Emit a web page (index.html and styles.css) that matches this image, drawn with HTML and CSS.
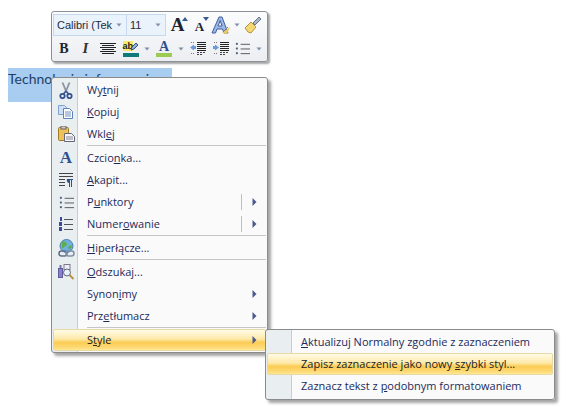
FILE: index.html
```html
<!DOCTYPE html>
<html lang="pl">
<head>
<meta charset="utf-8">
<title>Style</title>
<link rel="stylesheet" href="styles.css">
</head>
<body>
<svg class="defs" width="0" height="0" aria-hidden="true">
  <symbol id="dd" viewBox="0 0 6 4"><path d="M0.500 0.500h5L3 3.500z" fill="#7f90a8"/></symbol>
  <symbol id="arr" viewBox="0 0 5 8"><path d="M0.500 0L4.500 4L0.500 8z" fill="#4d5a8c"/></symbol>
  <symbol id="bullets" viewBox="0 0 16 16">
    <g fill="#4a5a7a"><rect x="1" y="2" width="2" height="2"/><rect x="1" y="7" width="2" height="2"/><rect x="1" y="12" width="2" height="2"/></g>
    <g fill="#555"><rect x="6" y="3" width="10" height="1"/><rect x="6" y="8" width="10" height="1"/><rect x="6" y="13" width="10" height="1"/></g>
  </symbol>
  <symbol id="lines" viewBox="0 0 16 13">
    <g fill="#222"><rect x="7" y="0" width="9" height="1"/><rect x="7" y="2" width="9" height="1"/><rect x="7" y="4" width="9" height="1"/><rect x="7" y="6" width="9" height="1"/><rect x="7" y="8" width="9" height="1"/></g>
    <g fill="#444"><rect x="7" y="10" width="2" height="1"/><rect x="10" y="10" width="2" height="1"/><rect x="13" y="10" width="2" height="1"/><rect x="7" y="12" width="2" height="1"/><rect x="10" y="12" width="2" height="1"/></g>
    <g fill="#777"><rect x="1" y="0" width="1" height="1"/><rect x="3" y="0" width="1" height="1"/><rect x="1" y="11" width="1" height="1"/><rect x="3" y="11" width="1" height="1"/></g>
  </symbol>
</svg>

<p class="doc"><span class="sel">Technologia informacyjna</span></p>

<div class="toolbar">
  <div class="row">
    <div class="combo c1"><span>Calibri (Tek</span><svg class="dd"><use href="#dd"/></svg></div>
    <div class="combo c2"><span>11</span><svg class="dd"><use href="#dd"/></svg></div>
    <div class="cell w23"><b class="ta big">A</b><svg class="up" width="6" height="4" viewBox="0 0 6 4"><path d="M0 4L3 0L6 4z" fill="#3a5a8c"/></svg></div>
    <div class="cell w21"><b class="ta small">A</b><svg class="up" width="6" height="4" viewBox="0 0 6 4"><path d="M0 0L3 4L6 0z" fill="#3a5a8c"/></svg></div>
    <div class="cell w30">
      <svg width="21" height="20" viewBox="0 0 21 20"><path d="M1 18L8 2h3l6 16h-4l-1.500-4H6L4.500 18z M7 11h4L9.200 5.500z" fill="#9cb8e6" stroke="#3f5f9e" stroke-width="1"/><path d="M11 18l8-6-3 7z" fill="#e9c85a"/><path d="M12 17l5-5" stroke="#778" stroke-width="1"/></svg>
      <svg class="dd"><use href="#dd"/></svg>
    </div>
    <div class="cell w26">
      <svg width="18" height="18" viewBox="0 0 18 18"><path d="M1 12L7 6l5 5-5 6-3-1z" fill="#f3d873" stroke="#b3953f" stroke-width="1"/><path d="M9 7l6-6 2 2-6 6z" fill="#aab6c6" stroke="#687486" stroke-width="1"/></svg>
    </div>
  </div>
  <div class="row r2">
    <div class="cell w22"><b class="tb">B</b></div>
    <div class="cell w21"><i class="ti">I</i></div>
    <div class="cell w24">
      <svg width="16" height="11" viewBox="0 0 16 11"><g fill="#222"><rect y="0" width="16" height="1"/><rect x="2" y="2" width="12" height="1"/><rect y="4" width="16" height="1"/><rect x="2" y="6" width="12" height="1"/><rect y="8" width="16" height="1"/><rect x="2" y="10" width="12" height="1"/></g></svg>
    </div>
    <div class="cell w21">
      <span class="hl"><span class="hl-ab">ab</span><svg class="pen" width="9" height="9" viewBox="0 0 9 9"><path d="M1 8l1-3 4-4 2 2-4 4z" fill="#8fb0e0" stroke="#3a4f7a" stroke-width="1"/></svg></span>
    </div>
    <div class="cell w12"><svg class="dd"><use href="#dd"/></svg></div>
    <div class="cell w22"><span class="fc">A</span></div>
    <div class="cell w11"><svg class="dd"><use href="#dd"/></svg></div>
    <div class="cell w24">
      <svg width="16" height="13" viewBox="0 0 16 13"><use href="#lines"/><path d="M0 5.500L4 2.500v1.500h2v3H4v1.500z" fill="#6a9bd8"/></svg>
    </div>
    <div class="cell w22">
      <svg width="16" height="13" viewBox="0 0 16 13"><use href="#lines"/><path d="M6 5.500L2 2.500v1.500H0v3h2v1.500z" fill="#6a9bd8"/></svg>
    </div>
    <div class="cell w20"><svg width="15" height="15"><use href="#bullets"/></svg></div>
    <div class="cell w14"><svg class="dd"><use href="#dd"/></svg></div>
  </div>
</div>

<div class="menu main">
  <div class="item"><span class="ico">
    <svg width="14" height="17" viewBox="0 0 14 17"><path d="M3.500 0.500l3.500 8.500M10.500 0.500L7 9" stroke="#8b95a2" stroke-width="1.800" fill="none"/><path d="M7 9L4.500 12M7 9l2.500 3" stroke="#3f5a92" stroke-width="1.800"/><circle cx="3.500" cy="14" r="2.200" fill="none" stroke="#33528f" stroke-width="1.800"/><circle cx="10.500" cy="14" r="2.200" fill="none" stroke="#33528f" stroke-width="1.800"/></svg>
  </span><span class="lbl">Wy<u>t</u>nij</span></div>
  <div class="item"><span class="ico">
    <svg width="16" height="14" viewBox="0 0 16 14"><path d="M0.500 0.500h6l2 2v7h-8z" fill="#cfe0f6" stroke="#7fa2d2"/><path d="M5.500 3.500h6l3 3v7h-9z" fill="#fff" stroke="#5f84b8"/><path d="M7 7h6M7 9h6M7 11h6" stroke="#6f8fc0"/></svg>
  </span><span class="lbl"><u>K</u>opiuj</span></div>
  <div class="item"><span class="ico">
    <svg width="17" height="16" viewBox="0 0 17 16"><rect x="0.500" y="1.500" width="10" height="13" rx="1" fill="#edc25a" stroke="#a07a24"/><rect x="3" y="0" width="5" height="3" fill="#c9ccd2" stroke="#666"/><path d="M6.500 7.500h7l3 3v5h-10z" fill="#f4f6fa" stroke="#667"/><path d="M8 11h7M8 13h7" stroke="#889"/></svg>
  </span><span class="lbl">Wkl<u>e</u>j</span></div>
  <div class="sep"></div>
  <div class="item"><span class="ico"><b class="mA">A</b></span><span class="lbl">Czcio<u>n</u>ka...</span></div>
  <div class="item"><span class="ico">
    <svg width="14" height="15" viewBox="0 0 14 15"><g fill="#444"><rect x="0" y="0" width="14" height="1"/><rect x="0" y="3" width="14" height="1"/><rect x="0" y="6" width="6" height="1"/><rect x="0" y="9" width="6" height="1"/><rect x="0" y="12" width="6" height="1"/></g><path d="M8 6h6v1h-1v7h-1V7h-1v7h-1v-4a2 2 0 0 1-2-2 2 2 0 0 1 0-2z" fill="#2f4f8f"/></svg>
  </span><span class="lbl"><u>A</u>kapit...</span></div>
  <div class="item"><span class="ico"><svg width="15" height="15"><use href="#bullets"/></svg></span><span class="lbl">P<u>u</u>nktory</span><span class="split"></span><svg class="arr"><use href="#arr"/></svg></div>
  <div class="item"><span class="ico">
    <svg width="14" height="15" viewBox="0 0 14 15"><g fill="#3b4a9b"><rect x="1" y="0" width="2" height="4"/><rect x="0" y="5" width="3" height="4"/><rect x="0" y="10" width="3" height="4"/></g><g fill="#555"><rect x="5" y="2" width="9" height="1"/><rect x="5" y="7" width="9" height="1"/><rect x="5" y="12" width="9" height="1"/></g></svg>
  </span><span class="lbl">Numer<u>o</u>wanie</span><span class="split"></span><svg class="arr"><use href="#arr"/></svg></div>
  <div class="sep"></div>
  <div class="item"><span class="ico">
    <svg width="17" height="18" viewBox="0 0 17 18"><circle cx="8.500" cy="7" r="6.500" fill="#6fb0e0" stroke="#4a7fae"/><path d="M4 3c2-1 5 0 5 2S5 8 4 10zM10 8l3-2 1 2-3 3z" fill="#5fae4c"/><rect x="1" y="12" width="8" height="5" rx="2.500" fill="none" stroke="#5f6f8a" stroke-width="1.500"/><rect x="8" y="12" width="8" height="5" rx="2.500" fill="none" stroke="#7f8fa8" stroke-width="1.500"/></svg>
  </span><span class="lbl"><u>H</u>iperłącze...</span></div>
  <div class="sep"></div>
  <div class="item"><span class="ico">
    <svg width="17" height="16" viewBox="0 0 17 16"><rect x="0.500" y="4.500" width="4" height="9" fill="#8a7fc8" stroke="#5f5a9a"/><rect x="1.500" y="1" width="2" height="3" fill="#7a70aa"/><rect x="6" y="0.500" width="6" height="5" fill="#eeeef4" stroke="#7a7a8a"/><circle cx="9" cy="8.500" r="3.500" fill="#e4f0fa" stroke="#667"/><path d="M11.500 11l4 4" stroke="#b89440" stroke-width="2"/></svg>
  </span><span class="lbl"><u>O</u>dszukaj...</span></div>
  <div class="item"><span class="ico"></span><span class="lbl">Synon<u>i</u>my</span><svg class="arr"><use href="#arr"/></svg></div>
  <div class="item"><span class="ico"></span><span class="lbl">Prz<u>e</u>tłumacz</span><svg class="arr"><use href="#arr"/></svg></div>
  <div class="sep"></div>
  <div class="item hot"><span class="ico"></span><span class="lbl">S<u>t</u>yle</span><svg class="arr"><use href="#arr"/></svg></div>
</div>

<div class="menu sub">
  <div class="item"><span class="ico"></span><span class="lbl"><u>A</u>ktualizuj Normalny zgodnie z zaznaczeniem</span></div>
  <div class="item hot"><span class="ico"></span><span class="lbl">Zapisz zaznaczenie jako nowy <u>s</u>zybki styl...</span></div>
  <div class="item"><span class="ico"></span><span class="lbl">Zaznacz tekst z <u>p</u>odobnym formatowaniem</span></div>
</div>
</body>
</html>
```
FILE: styles.css
```css
* { box-sizing: border-box; }
html, body { margin: 0; padding: 0; background: #fff; }
body {
  width: 563px;
  height: 406px;
  overflow: hidden;
  position: relative;
  font-family: "Open Sans", "Noto Sans", sans-serif;
}
.defs { position: absolute; }
.doc {
  margin: 0;
  padding: 67px 0 0 8px;
}
.sel {
  display: inline-block;
  width: 164px;
  height: 34px;
  padding-top: 1px;
  background: #a8cdf1;
  color: #1f3f66;
  font-family: Lato, sans-serif;
  font-size: 14px;
  line-height: 20px;
  white-space: nowrap;
}
.toolbar {
  position: absolute;
  left: 51px;
  top: 11px;
  width: 217px;
  height: 51px;
  padding: 2px 1px 0;
  border: 1px solid #8b9097;
  border-radius: 3px;
  background: linear-gradient(#fbfcfd, #eceef2);
  box-shadow: 2px 2px 2px rgba(90, 90, 90, .55);
}
.row { display: flex; height: 22px; align-items: stretch; }
.r2 { height: 23px; margin-top: 1px; }
.combo {
  display: flex;
  align-items: center;
  justify-content: space-between;
  border: 1px solid #c6d8ee;
  background: #eaf2fb;
  padding: 0 4px 0 3px;
  font-family: "Liberation Sans", sans-serif;
  font-size: 11px;
  color: #1e2a3a;
  white-space: nowrap;
}
.c1 { width: 74px; }
.c2 { width: 40px; margin-left: -1px; }
.dd { width: 6px; height: 4px; flex: none; }
.cell { display: flex; align-items: center; justify-content: center; position: relative; gap: 2px; }
.w11 { width: 11px; } .w12 { width: 12px; } .w14 { width: 14px; } .w20 { width: 20px; }
.w21 { width: 21px; } .w22 { width: 22px; } .w23 { width: 23px; } .w24 { width: 24px; }
.w26 { width: 26px; } .w30 { width: 30px; }
.ta, .tb, .ti, .mA { font-family: "Liberation Serif", serif; color: #1c2430; }
.ta { font-weight: 700; }
.big { font-size: 19px; line-height: 20px; }
.small { font-size: 13px; line-height: 14px; margin-top: 3px; }
.up { position: absolute; top: 3px; right: 1px; }
.tb { font-size: 14px; font-weight: 700; }
.ti { font-size: 15px; font-weight: 700; color: #333; }
.hl {
  display: block;
  position: relative;
  width: 16px;
  height: 16px;
  border-bottom: 4px solid #0f7a7a;
}
.hl-ab {
  display: block;
  width: 10px;
  height: 10px;
  background: #f6ec6a;
  font: 700 9px/10px "Liberation Sans", sans-serif;
  color: #222;
}
.pen { position: absolute; right: 0; top: 1px; }
.fc {
  display: block;
  width: 16px;
  height: 16px;
  border-bottom: 4px solid #9bcb52;
  font: 700 14px/12px "Liberation Serif", serif;
  color: #2f4f8f;
  text-align: center;
}
.menu {
  position: absolute;
  border: 1px solid #8b8b8b;
  border-radius: 3px;
  padding: 1px;
  box-shadow: 3px 3px 3px rgba(90, 90, 90, .55);
  background: linear-gradient(90deg, #e9eef0 25px, #c9cdd0 25px, #c9cdd0 26px, #fafafa 26px);
}
.main { left: 51px; top: 77px; width: 217px; height: 276px; }
.sub { left: 265px; top: 329px; width: 290px; height: 71px; }
.item {
  display: flex;
  align-items: center;
  height: 22px;
  padding-right: 9px;
  font-size: 11px;
  color: #1c2a5c;
  white-space: nowrap;
}
.ico { width: 26px; flex: none; display: flex; align-items: center; justify-content: center; }
.lbl { margin-left: 8px; flex: 1; padding-bottom: 2px; }
.mA { font-size: 17px; font-weight: 700; line-height: 20px; color: #2f4f8f; }
.split { width: 1px; height: 16px; background: #c9bfa8; margin-right: 10px; }
.arr { width: 5px; height: 8px; flex: none; }
.sep { height: 1px; margin: 0 0 1px 34px; background: #c6c6c6; }
.hot {
  border: 1px solid #e8d9a4;
  border-radius: 2px;
  background: linear-gradient(#fffbe6, #fee9a8 45%, #fbcc55 62%, #fdd870 85%, #fee796);
  color: #222;
  padding-right: 8px;
}
.hot .ico { width: 25px; }
```
